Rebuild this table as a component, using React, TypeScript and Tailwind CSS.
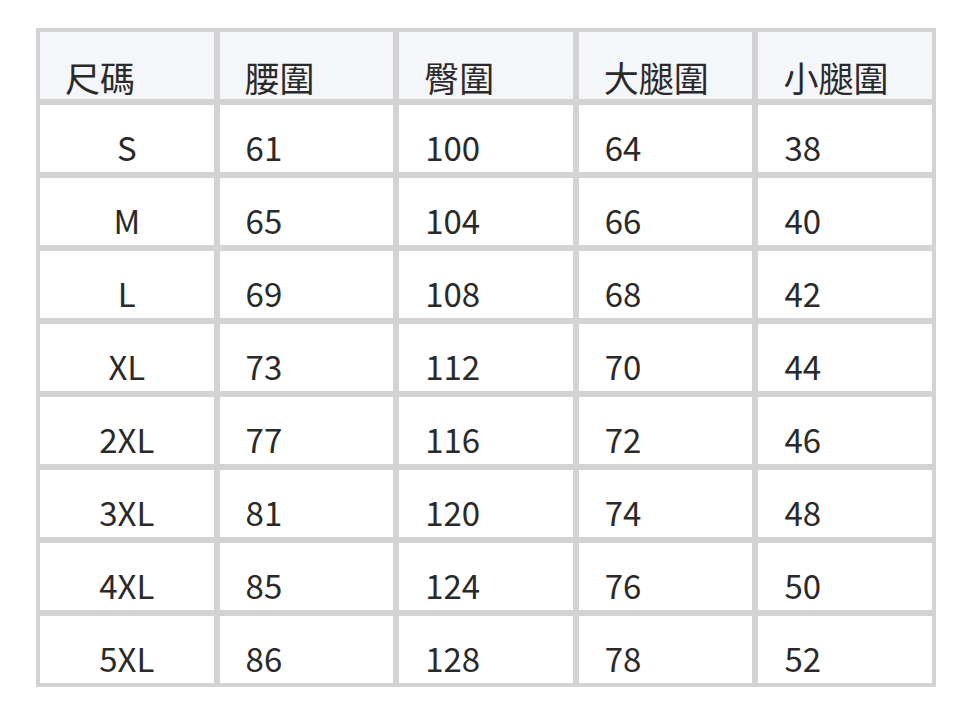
const headers = ["尺碼", "腰圍", "臀圍", "大腿圍", "小腿圍"];

const rows: string[][] = [
  ["S", "61", "100", "64", "38"],
  ["M", "65", "104", "66", "40"],
  ["L", "69", "108", "68", "42"],
  ["XL", "73", "112", "70", "44"],
  ["2XL", "77", "116", "72", "46"],
  ["3XL", "81", "120", "74", "48"],
  ["4XL", "85", "124", "76", "50"],
  ["5XL", "86", "128", "78", "52"],
];

const App = () => {
  return (
    <div
      className="min-h-screen bg-white pt-[28px] px-[36px] text-[#2a2a2a]"
      style={{ fontFamily: '"Noto Sans CJK TC", "Noto Sans", sans-serif' }}
    >
      <div className="grid grid-cols-5 gap-[6px] bg-[#d3d3d3] p-[4px] w-[900px]">
        {headers.map((h) => (
          <div
            key={h}
            className="h-[67px] bg-[#f5f6fa] flex items-end pl-[25px] pb-[5px] text-[35px] leading-none"
          >
            {h}
          </div>
        ))}
        {rows.map((row) =>
          row.map((cell, i) => (
            <div
              key={row[0] + i}
              className={
                i === 0
                  ? "h-[67px] bg-white flex items-end justify-center pb-[8px] text-[33px] leading-none"
                  : "h-[67px] bg-white flex items-end pl-[26px] pb-[8px] text-[33px] leading-none"
              }
            >
              {cell}
            </div>
          ))
        )}
      </div>
    </div>
  );
};

export default App;
